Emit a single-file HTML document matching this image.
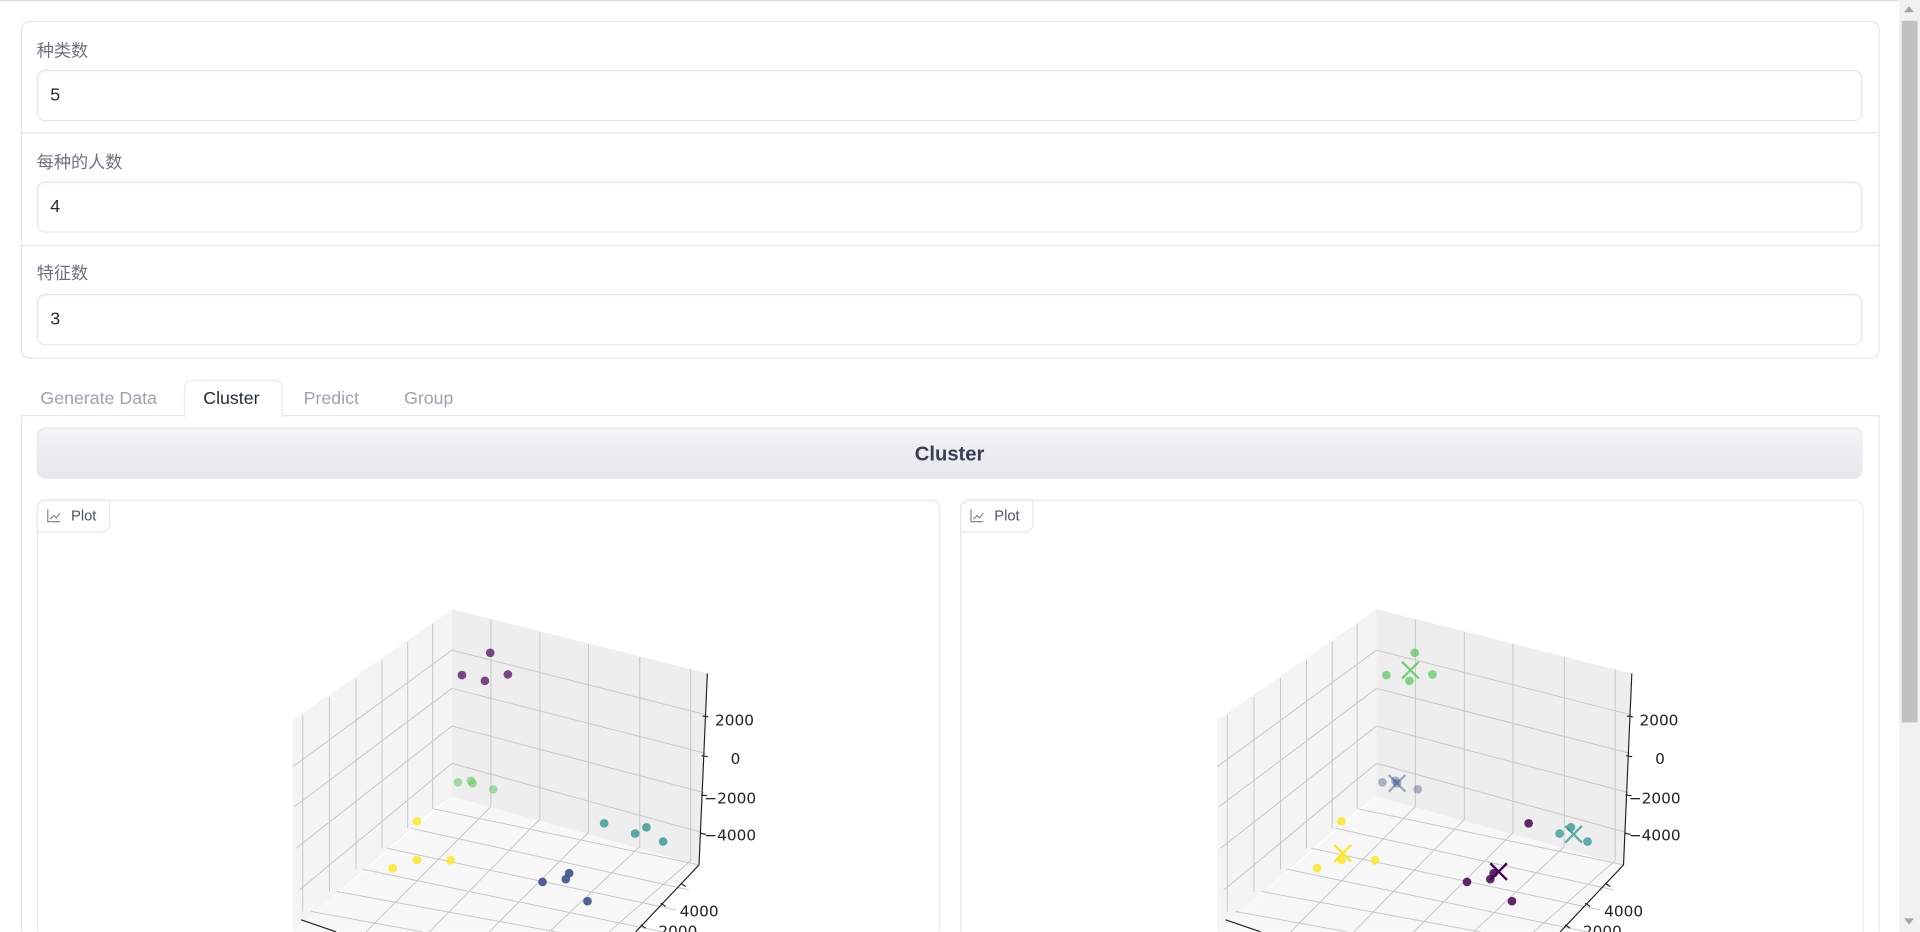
<!DOCTYPE html>
<html><head><meta charset="utf-8">
<style>
html,body{margin:0;padding:0;width:1920px;height:932px;overflow:hidden;background:#fff;}
#w{position:absolute;left:0;top:0;width:1568px;height:761px;overflow:hidden;transform:scale(1.22449);transform-origin:0 0;font-family:"Liberation Sans","Noto Sans CJK SC",sans-serif;}
.a{position:absolute;box-sizing:border-box;}
svg.a{overflow:visible;}
.card{border:1px solid #e5e7eb;border-radius:7px;}
.lbl{font-size:14px;color:#6b7280;}
.inp{border:1px solid #e5e7eb;border-radius:7px;box-shadow:inset 0 1px 2px rgba(0,0,0,.04);font-size:14.5px;color:#1f2937;padding-left:10px;line-height:40px;}
.tab{font-size:14.5px;color:#9ca3af;}
</style></head><body>
<div id="w">
<div class="a" style="left:0;top:0;width:1551px;height:1px;background:#dcdcdc"></div>
<div class="a card" style="left:17px;top:17px;width:1518px;height:276px"></div>
<div class="a lbl" style="left:30px;top:31px">种类数</div>
<div class="a inp" style="left:30px;top:57px;width:1491px;height:42px">5</div>
<div class="a" style="left:17px;top:108px;width:1518px;height:1px;background:#e5e7eb"></div>
<div class="a lbl" style="left:30px;top:122px">每种的人数</div>
<div class="a inp" style="left:30px;top:148px;width:1491px;height:42px">4</div>
<div class="a" style="left:17px;top:200px;width:1518px;height:1px;background:#e5e7eb"></div>
<div class="a lbl" style="left:30px;top:213px">特征数</div>
<div class="a inp" style="left:30px;top:240px;width:1491px;height:42px">3</div>
<div class="a" style="left:17px;top:339px;width:1518px;height:422px;border:1px solid #e5e7eb;border-bottom:none"></div>
<div class="a tab" style="left:33px;top:318px">Generate Data</div>
<div class="a" style="left:150px;top:310px;width:81px;height:31px;background:#fff;border:1px solid #e5e7eb;border-bottom:none;border-radius:7px 7px 0 0"></div>
<div class="a tab" style="left:166px;top:318px;color:#1f2937">Cluster</div>
<div class="a tab" style="left:248px;top:318px">Predict</div>
<div class="a tab" style="left:330px;top:318px">Group</div>
<div class="a" style="left:30px;top:349px;width:1491px;height:42px;border-radius:7px;border:1px solid #e5e7eb;background:linear-gradient(#f3f4f6,#e5e7eb);text-align:center;line-height:42px;font-weight:bold;font-size:16.5px;color:#374151">Cluster</div>
<div class="a" style="left:30px;top:408px;width:738px;height:353px;border:1px solid #e5e7eb;border-bottom:none;border-radius:7px 7px 0 0"></div>
<div class="a" style="left:784px;top:408px;width:738px;height:353px;border:1px solid #e5e7eb;border-bottom:none;border-radius:7px 7px 0 0"></div>
<div class="a" style="left:30px;top:408px;width:60px;height:27px;border:1px solid #e5e7eb;border-radius:7px 0 7px 0;font-size:12px;color:#4b5563;line-height:25px;padding-left:27px">Plot</div>
<div class="a" style="left:784px;top:408px;width:60px;height:27px;border:1px solid #e5e7eb;border-radius:7px 0 7px 0;font-size:12px;color:#4b5563;line-height:25px;padding-left:27px">Plot</div>
<svg class="a" style="left:38px;top:415px" width="12" height="12" viewBox="0 0 12 12" fill="none" stroke="#888" stroke-width="1"><path d="M1 1V11H11M3 9l3-3 2 2 3-4"/></svg>
<svg class="a" style="left:792px;top:415px" width="12" height="12" viewBox="0 0 12 12" fill="none" stroke="#888" stroke-width="1"><path d="M1 1V11H11M3 9l3-3 2 2 3-4"/></svg>

<svg id="p1" class="a" style="left:209px;top:482px" width="408.3" height="279" viewBox="0 0 1500 1026">
<g id="grid">
<polygon points="588,57 110,390 110,1026 535,657 588,620" fill="#f4f4f4"/>
<polygon points="588,57 1355,250 1330,825 588,620" fill="#eeeeee"/>
<polygon points="588,620 1330,825 1140,1026 110,1026" fill="#f7f7f7"/>
<g stroke="#c8c8c8" stroke-width="3" fill="none">
<path d="M588,180L1355,375M588,295L1350,490M588,408L1345,608M588,520L1340,728"/>
<path d="M705,88L705,650M852,125L852,688M998,160L998,728M1152,200L1152,770M1305,237L1305,812"/>
<path d="M530,100L530,657M455,155L455,715M378,210L378,775M300,265L300,838M220,320L220,905M140,375L140,965"/>
<path d="M588,180L110,530M588,295L115,650M588,408L120,775M588,520L130,900"/>
<path d="M535,657L1330,825M465,715L1300,900M393,775L1260,960M320,838L1220,1026M243,905L900,1026M165,965L500,1026"/>
<path d="M705,650L330,1026M852,688L520,1026M998,728L700,1026M1152,770L880,1026M1305,812L1060,1026"/>
</g>
<g stroke="#222" stroke-width="3.5" fill="none">
<path d="M1355,250L1330,825L1140,1026M135,990L240,1026"/>
<path d="M1340,378L1358,380M1338,497L1356,500M1336,615L1354,617M1333,730L1351,733M1275,880L1290,890M1215,940L1230,950M1155,1005L1170,1015"/>
</g>
<g font-family="DejaVu Sans,Liberation Sans,sans-serif" font-size="46" fill="#222">
<text x="1378" y="406">2000</text><text x="1425" y="522">0</text><text x="1346" y="640">−2000</text><text x="1346" y="752">−4000</text><text x="1272" y="980">4000</text><text x="1208" y="1040">2000</text>
</g>
</g>
<g stroke="none">
<g fill="#440154" fill-opacity=".7"><circle cx="703" cy="188" r="13"/><circle cx="618" cy="255" r="13"/><circle cx="687" cy="272" r="13"/><circle cx="756" cy="253" r="13"/></g>
<g fill="#5ec962" fill-opacity=".55"><circle cx="606" cy="577" r="13"/><circle cx="645" cy="572" r="13"/><circle cx="650" cy="580" r="13"/><circle cx="712" cy="598" r="13"/></g>
<g fill="#fde725" fill-opacity=".85"><circle cx="483" cy="694" r="13"/><circle cx="483" cy="810" r="13"/><circle cx="410" cy="835" r="13"/><circle cx="584" cy="811" r="13"/></g>
<g fill="#21918c" fill-opacity=".75"><circle cx="1045" cy="700" r="13"/><circle cx="1138" cy="731" r="13"/><circle cx="1172" cy="712" r="13"/><circle cx="1222" cy="755" r="13"/></g>
<g fill="#3b528b" fill-opacity=".9"><circle cx="860" cy="876" r="13"/><circle cx="930" cy="868" r="13"/><circle cx="940" cy="850" r="13"/><circle cx="995" cy="934" r="13"/></g>
</g>
</svg>

<svg class="a" style="left:963.6px;top:482px" width="408.3" height="279" viewBox="0 0 1500 1026">
<use href="#grid"/>
<g fill="#5ec962" fill-opacity=".75"><circle cx="703" cy="188" r="13"/><circle cx="618" cy="255" r="13"/><circle cx="687" cy="272" r="13"/><circle cx="756" cy="253" r="13"/></g>
<g fill="#3b528b" fill-opacity=".4"><circle cx="606" cy="577" r="13"/><circle cx="645" cy="572" r="13"/><circle cx="650" cy="580" r="13"/><circle cx="712" cy="598" r="13"/></g>
<g fill="#fde725" fill-opacity=".85"><circle cx="483" cy="694" r="13"/><circle cx="483" cy="810" r="13"/><circle cx="410" cy="835" r="13"/><circle cx="584" cy="811" r="13"/></g>
<g fill="#21918c" fill-opacity=".7"><circle cx="1138" cy="731" r="13"/><circle cx="1172" cy="712" r="13"/><circle cx="1222" cy="755" r="13"/></g>
<g fill="#440154" fill-opacity=".85"><circle cx="1045" cy="700" r="13"/><circle cx="860" cy="876" r="13"/><circle cx="930" cy="868" r="13"/><circle cx="940" cy="850" r="13"/><circle cx="995" cy="934" r="13"/></g>
<g stroke-width="7" fill="none">
<path d="M665,215L715,265M715,215L665,265" stroke="#5ec962" stroke-opacity=".85"/>
<path d="M625,555L675,605M675,555L625,605" stroke="#3b528b" stroke-opacity=".45"/>
<path d="M462,765L512,815M512,765L462,815" stroke="#fde725"/>
<path d="M930,820L980,870M980,820L930,870" stroke="#440154"/>
<path d="M1155,708L1205,758M1205,708L1155,758" stroke="#21918c" stroke-opacity=".7"/>
</g>
</svg>

<div class="a" style="left:1551px;top:0;width:17px;height:761px;background:#f1f1f1"></div>
<div class="a" style="left:1553px;top:17px;width:13px;height:573px;background:#c1c1c1"></div>
<div class="a" style="left:1555px;top:5px;width:0;height:0;border-left:4px solid transparent;border-right:4px solid transparent;border-bottom:5px solid #a3a3a3"></div>
<div class="a" style="left:1555px;top:750px;width:0;height:0;border-left:4px solid transparent;border-right:4px solid transparent;border-top:5px solid #a3a3a3"></div>
</div>
</body></html>
